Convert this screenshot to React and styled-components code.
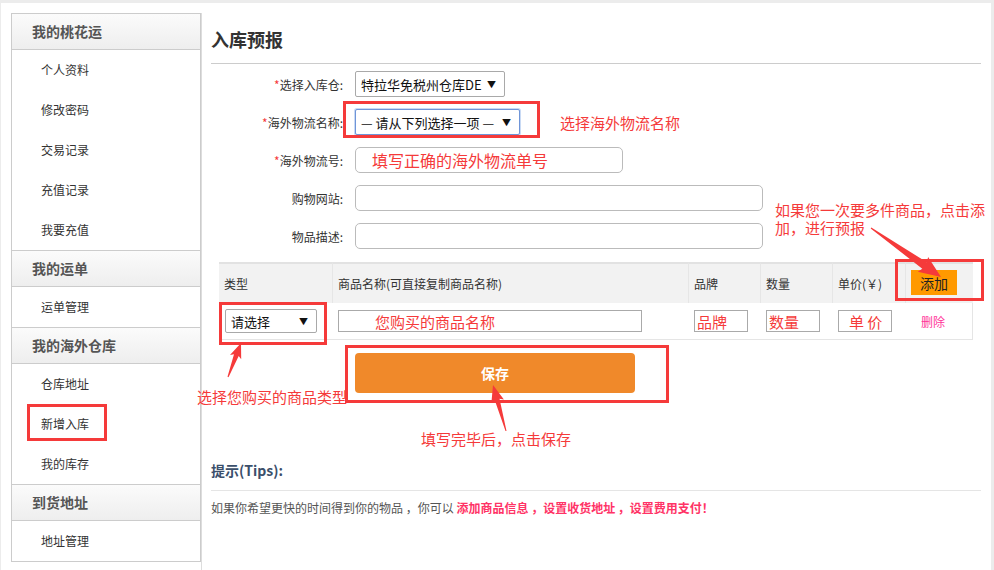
import React from 'react'
import styled, { createGlobalStyle } from 'styled-components'

const FONT = '"Noto Sans CJK SC", "Noto Sans", "Liberation Sans", sans-serif'
const RED = '#f53a3a'

const GlobalStyle = createGlobalStyle`
  html, body {
    margin: 0;
    padding: 0;
    background: #ececec;
  }
  body {
    font-family: ${FONT};
    color: #333;
  }
  * {
    box-sizing: border-box;
  }
`

const menu = [
  { title: '我的桃花运', items: ['个人资料', '修改密码', '交易记录', '充值记录', '我要充值'] },
  { title: '我的运单', items: ['运单管理'] },
  { title: '我的海外仓库', items: ['仓库地址', '新增入库', '我的库存'] },
  { title: '到货地址', items: ['地址管理'] },
]

// tapered annotation arrow, tail -> tip
const arrowPoints = (x1, y1, x2, y2, tailW, shaftW, headW, headL) => {
  const len = Math.hypot(x2 - x1, y2 - y1)
  const dx = (x2 - x1) / len
  const dy = (y2 - y1) / len
  const nx = -dy
  const ny = dx
  const bx = x2 - dx * headL
  const by = y2 - dy * headL
  const p = (x, y, w) => `${(x + nx * w).toFixed(1)},${(y + ny * w).toFixed(1)}`
  return [
    p(x1, y1, tailW / 2),
    p(bx, by, shaftW / 2),
    p(bx - dx * 2, by - dy * 2, headW / 2),
    `${x2},${y2}`,
    p(bx - dx * 2, by - dy * 2, -headW / 2),
    p(bx, by, -shaftW / 2),
    p(x1, y1, -tailW / 2),
  ].join(' ')
}

const App = () => {
  return (
    <>
      <GlobalStyle />
      <Page>
        <Sidebar>
          {menu.map((group, gi) => (
            <div key={group.title}>
              <GroupTitle first={gi === 0}>{group.title}</GroupTitle>
              {group.items.map((item) => (
                <MenuItem key={item}>{item}</MenuItem>
              ))}
            </div>
          ))}
        </Sidebar>

        <Main>
          <Title>入库预报</Title>

          <Form>
            <FormRow>
              <Label><Star>*</Star>选择入库仓:</Label>
              <SelectBox width={150}>
                <span>特拉华免税州仓库DE</span>
                <Caret>▼</Caret>
              </SelectBox>
            </FormRow>

            <FormRow>
              <Label><Star>*</Star>海外物流名称:</Label>
              <SelectBox width={165} focused>
                <span>— 请从下列选择一项 —</span>
                <Caret>▼</Caret>
              </SelectBox>
              <Hint>选择海外物流名称</Hint>
            </FormRow>

            <FormRow>
              <Label><Star>*</Star>海外物流号:</Label>
              <TextInput width={268} indent={16} placeholder="填写正确的海外物流单号" />
            </FormRow>

            <FormRow>
              <Label>购物网站:</Label>
              <TextInput width={408} />
            </FormRow>

            <FormRow last>
              <Label>物品描述:</Label>
              <TextInput width={408} />
            </FormRow>
          </Form>

          <Table>
            <HeadCell>类型</HeadCell>
            <HeadCell>商品名称(可直接复制商品名称)</HeadCell>
            <HeadCell>品牌</HeadCell>
            <HeadCell>数量</HeadCell>
            <HeadCell>单价(￥)</HeadCell>
            <HeadCell last>
              <AddButton>添加</AddButton>
            </HeadCell>

            <BodyCell>
              <SelectBox width={92} height={24}>
                <span>请选择</span>
                <Caret>▼</Caret>
              </SelectBox>
            </BodyCell>
            <BodyCell>
              <CellInput width={304} indent={36} placeholder="您购买的商品名称" />
            </BodyCell>
            <BodyCell>
              <CellInput width={54} indent={2} placeholder="品牌" />
            </BodyCell>
            <BodyCell>
              <CellInput width={54} indent={2} placeholder="数量" />
            </BodyCell>
            <BodyCell>
              <CellInput width={54} indent={10} placeholder="单 价" />
            </BodyCell>
            <BodyCell last>
              <DeleteLink>删除</DeleteLink>
            </BodyCell>
          </Table>

          <SaveRow>
            <SaveButton>保存</SaveButton>
          </SaveRow>

          <TipsTitle>提示(Tips):</TipsTitle>
          <TipsText>
            如果你希望更快的时间得到你的物品 ，你可以{' '}
            <TipsLink>添加商品信息 ，设置收货地址 ，设置费用支付！</TipsLink>
          </TipsText>
        </Main>

        <MarkBox left={26} top={401} width={80} height={37} />
        <MarkBox left={342} top={98} width={197} height={37} />
        <MarkBox left={218} top={299} width={108} height={43} />
        <MarkBox left={894} top={256} width={89} height={42} />
        <MarkBox left={344} top={342} width={324} height={58} />

        <Note left={196} top={384}>选择您购买的商品类型</Note>
        <Note left={420} top={426}>填写完毕后，点击保存</Note>
        <Note left={774} top={198} width={214}>如果您一次要多件商品，点击添加，进行预报</Note>

        <ArrowLayer width="994" height="570" viewBox="0 0 994 570">
          <polygon fill={RED} points={arrowPoints(871, 228, 941, 277, 1, 8, 18, 20)} />
          <polygon fill={RED} points={arrowPoints(228, 377, 241, 343, 1, 5, 12, 13)} />
          <polygon fill={RED} points={arrowPoints(506, 431, 493, 385, 1, 5, 13, 15)} />
        </ArrowLayer>
      </Page>
    </>
  )
}

export default App

const Page = styled.div`
  position: relative;
  width: 990px;
  height: 567px;
  margin: 3px 0 0 1px;
  padding: 10px 10px 0 10px;

  background: #ffffff;

  display: flex;
  align-items: flex-start;
`

const Sidebar = styled.nav`
  width: 190px;
  flex-shrink: 0;
  border: 1px solid #cccccc;
  background: #ffffff;
`

const GroupTitle = styled.div`
  height: ${(p) => (p.first ? '36px' : '37px')};
  padding-left: 20px;
  padding-bottom: 2px;

  display: flex;
  align-items: center;

  background: linear-gradient(#fbfbfb, #eeeeee);
  border-top: ${(p) => (p.first ? 'none' : '1px solid #cccccc')};
  border-bottom: 1px solid #cccccc;

  font-size: 14px;
  font-weight: bold;
  color: #555555;
`

const MenuItem = styled.div`
  height: 40px;
  padding-left: 29px;
  padding-bottom: 1px;

  display: flex;
  align-items: center;

  font-size: 12px;
  color: #333333;
`

const Main = styled.main`
  flex: 1;
  align-self: stretch;
  padding: 0 0 0 9px;
  border-left: 1px solid #dddddd;
`

const Title = styled.h2`
  margin: 0;
  padding: 16px 0 14px;
  border-bottom: 1px solid #cccccc;

  font-size: 18px;
  line-height: 20px;
  font-weight: bold;
  color: #333333;
`

const Form = styled.div`
  margin-top: 7px;
`

const FormRow = styled.div`
  height: 26px;
  margin-bottom: ${(p) => (p.last ? '0' : '12px')};

  display: flex;
  align-items: center;
`

const Label = styled.label`
  width: 132px;
  margin-right: 12px;
  text-align: right;

  font-size: 12px;
  color: #333333;
`

const Star = styled.span`
  color: ${RED};
`

const SelectBox = styled.div`
  width: ${(p) => p.width}px;
  height: ${(p) => p.height || 26}px;
  padding: 0 8px 0 5px;

  display: flex;
  align-items: center;
  justify-content: space-between;

  background: #ffffff;
  border: 1px solid ${(p) => (p.focused ? '#6f95d8' : '#a9a9a9')};
  border-radius: 2px;
  box-shadow: ${(p) => (p.focused ? '0 0 0 1px #c9daf4' : 'none')};

  font-size: 13px;
  color: #111111;
  white-space: nowrap;
`

const Caret = styled.span`
  font-size: 9px;
  color: #111111;
`

const Hint = styled.span`
  margin-left: 40px;
  font-size: 15px;
  color: ${RED};
`

const TextInput = styled.input`
  width: ${(p) => p.width}px;
  height: 26px;
  padding: 0 0 0 ${(p) => p.indent || 6}px;

  border: 1px solid #bbbbbb;
  border-radius: 5px;
  outline: none;

  font-family: ${FONT};
  font-size: 16px;

  &::placeholder {
    color: ${RED};
    opacity: 1;
  }
`

const Table = styled.div`
  width: 754px;
  margin: 13px 0 0 8px;

  display: grid;
  grid-template-columns: 114px 356px 72px 72px 73px 67px;
`

const HeadCell = styled.div`
  height: 41px;
  padding-left: 5px;

  display: flex;
  align-items: center;

  background: #f2f2f2;
  border-top: 2px solid #e2e2e2;
  border-right: ${(p) => (p.last ? 'none' : '1px solid #e6e6e6')};

  font-size: 12px;
  color: #333333;
`

const AddButton = styled.button`
  width: 46px;
  height: 25px;
  padding: 0;
  margin-top: -2px;

  background: #ff9900;
  border: none;

  font-family: ${FONT};
  font-size: 14px;
  color: #222222;
  cursor: pointer;
`

const BodyCell = styled.div`
  height: 37px;
  padding-left: ${(p) => (p.last ? '15px' : '5px')};

  display: flex;
  align-items: center;

  background: #ffffff;
  border-bottom: 1px solid #e5e5e5;
  &:nth-child(7) {
    border-left: 1px solid #e5e5e5;
  }
  border-right: ${(p) => (p.last ? '1px solid #e5e5e5' : 'none')};
`

const CellInput = styled.input`
  width: ${(p) => p.width}px;
  height: 22px;
  padding: 0 0 0 ${(p) => p.indent}px;

  border: 1px solid #aaaaaa;
  outline: none;

  font-family: ${FONT};
  font-size: 15px;

  &::placeholder {
    color: ${RED};
    opacity: 1;
  }
`

const DeleteLink = styled.a`
  font-size: 12px;
  color: #ff3399;
  cursor: pointer;
`

const SaveRow = styled.div`
  margin: 13px 0 0 144px;
`

const SaveButton = styled.button`
  width: 280px;
  height: 40px;

  background: #f0892a;
  border: none;
  border-radius: 4px;

  font-family: ${FONT};
  font-size: 14px;
  font-weight: bold;
  color: #ffffff;
  cursor: pointer;
`

const TipsTitle = styled.h3`
  margin: 67px 0 0;
  padding-bottom: 10px;
  border-bottom: 1px solid #e5e5e5;

  font-size: 14px;
  line-height: 20px;
  font-weight: bold;
  color: #3b4f6b;
`

const TipsText = styled.p`
  margin: 8px 0 0;
  font-size: 12px;
  line-height: 18px;
  color: #555555;
`

const TipsLink = styled.span`
  font-weight: bold;
  color: #ff3366;
`

const MarkBox = styled.div`
  position: absolute;
  left: ${(p) => p.left}px;
  top: ${(p) => p.top}px;
  width: ${(p) => p.width}px;
  height: ${(p) => p.height}px;

  border: 3px solid ${RED};
  pointer-events: none;
`

const Note = styled.div`
  position: absolute;
  left: ${(p) => p.left}px;
  top: ${(p) => p.top}px;
  width: ${(p) => (p.width ? `${p.width}px` : 'auto')};

  font-size: 15px;
  line-height: ${(p) => (p.width ? '18px' : '20px')};
  color: ${RED};
  white-space: ${(p) => (p.width ? 'normal' : 'nowrap')};
`

const ArrowLayer = styled.svg`
  position: absolute;
  left: -1px;
  top: -3px;
  pointer-events: none;
`
